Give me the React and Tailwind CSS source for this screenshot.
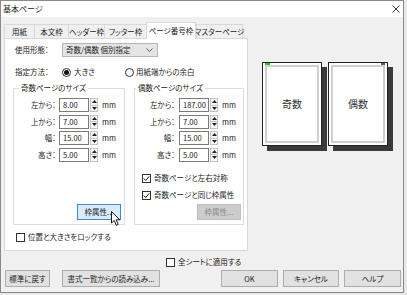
import React from "react";

function Spin() {
  return (
    <div className="ml-[1px] w-[8px] h-[14px] flex flex-col border border-[#c4c4c4] bg-[#f7f7f7]">
      <div className="flex-1 flex items-center justify-center">
        <svg width="5" height="3" viewBox="0 0 5 3"><path d="M0 3L2.5 0L5 3Z" fill="#222" /></svg>
      </div>
      <div className="h-px bg-[#c4c4c4]" />
      <div className="flex-1 flex items-center justify-center">
        <svg width="5" height="3" viewBox="0 0 5 3"><path d="M0 0L2.5 3L5 0Z" fill="#222" /></svg>
      </div>
    </div>
  );
}

function NumRow({ label, value, labelW }) {
  return (
    <div className="flex items-center h-[14px]">
      <div className={labelW + " text-right"}>{label}</div>
      <div className="w-[30px] h-[14px] border border-[#7a7a7a] bg-white flex items-center pl-[3px]">{value}</div>
      <Spin />
      <div className="ml-[4px]">mm</div>
    </div>
  );
}

function Check({ checked }) {
  return (
    <span className="w-[9px] h-[9px] border border-[#333] bg-white flex items-center justify-center shrink-0">
      {checked && (
        <svg width="7" height="7" viewBox="0 0 7 7">
          <path d="M0.8 3.6L2.7 5.5L6.3 1.3" stroke="#111" strokeWidth="1" fill="none" />
        </svg>
      )}
    </span>
  );
}

function Radio({ on }) {
  return (
    <span className="w-[9px] h-[9px] rounded-full border border-[#333] bg-white flex items-center justify-center shrink-0">
      {on && <span className="w-[5px] h-[5px] rounded-full bg-[#111]" />}
    </span>
  );
}

const tabs = [
  { t: "用紙", w: "w-[30px]" },
  { t: "本文枠", w: "w-[34px]" },
  { t: "ヘッダー枠", w: "w-[36px]" },
  { t: "フッター枠", w: "w-[42px]" },
  { t: "ページ番号枠", w: "w-[50px]", sel: true },
  { t: "マスターページ", w: "w-[47px]", last: true },
];

function Page({ label, mark }) {
  return (
    <div className="relative w-[60px] h-[84px] bg-white border border-[#222] shadow-[5px_5px_0_#3a3a3a] p-[2px]">
      {mark === "left" && <div className="absolute left-[2px] top-0 w-[5px] h-[2px] bg-[#22c322]" />}
      {mark === "right" && <div className="absolute right-[2px] top-0 w-[4px] h-[2px] bg-[#7a4a6a]" />}
      <div className="w-full h-full border-2 border-[#cfcfcf] flex items-center justify-center text-[10px] text-[#333]">{label}</div>
    </div>
  );
}

export default function App() {
  return (
    <div className="relative w-[407px] h-[295px] bg-[#e9e9e9] overflow-hidden font-['Noto_Sans_CJK_JP',sans-serif] [font-feature-settings:'palt'] text-[7.5px] leading-[12px] text-[#1a1a1a] whitespace-nowrap">
      <div className="w-[404px] h-[293px] bg-[#f0f0f0] border border-[#8a8a8a] flex flex-col">
        {/* title bar */}
        <div className="h-[16px] bg-white flex items-center justify-between pl-[2px] pr-[3px]">
          <span className="text-[8px]">基本ページ</span>
          <svg width="8" height="8" viewBox="0 0 8 8">
            <path d="M0.5 0.5L7.5 7.5M7.5 0.5L0.5 7.5" stroke="#222" strokeWidth="0.9" />
          </svg>
        </div>

        {/* main area */}
        <div className="flex pt-[5px] pl-[3px]">
          <div className="w-[244px] flex flex-col">
            <div className="flex items-end h-[16px]">
              {tabs.map((tb) =>
                tb.sel ? (
                  <div key={tb.t} className={tb.w + " h-[17px] -mb-px relative z-10 bg-white border border-b-0 border-[#d9d9d9] flex items-center justify-center"}>
                    {tb.t}
                  </div>
                ) : (
                  <div key={tb.t} className={tb.w + " h-[14px] border-t border-l border-[#d9d9d9] bg-[#f0f0f0] flex items-center justify-center " + (tb.last ? "border-r" : "")}>
                    {tb.t}
                  </div>
                )
              )}
            </div>

            <div className="w-[244px] h-[213px] bg-white border border-[#d9d9d9] flex flex-col">
              <div className="mt-[4px] ml-[10px] flex items-center h-[14px]">
                <div className="w-[47px]">使用形態：</div>
                <div className="w-[96px] h-[14px] bg-[#e5e5e5] border border-[#b5b5b5] flex items-center justify-between pl-[3px] pr-[4px]">
                  <span>奇数/偶数 個別指定</span>
                  <svg width="7" height="4" viewBox="0 0 7 4">
                    <path d="M0.5 0.5L3.5 3.5L6.5 0.5" stroke="#333" strokeWidth="0.8" fill="none" />
                  </svg>
                </div>
              </div>

              <div className="mt-[8px] ml-[10px] flex items-center h-[14px]">
                <div className="w-[47px]">指定方法：</div>
                <div className="w-[63px] flex items-center gap-[3px]">
                  <Radio on />
                  <span>大きさ</span>
                </div>
                <div className="flex items-center gap-[2px]">
                  <Radio />
                  <span>用紙端からの余白</span>
                </div>
              </div>

              <div className="mt-[3px] ml-[8px] flex gap-[9px]">
                <fieldset className="w-[112px] border border-[#dcdcdc]">
                  <legend className="ml-[5px] px-[2px] leading-[12px]">奇数ページのサイズ</legend>
                  <div className="h-[130px] flex flex-col pt-[4px] pb-[4px] pr-[3px]">
                    <div className="flex flex-col gap-[2.5px]">
                      <NumRow label="左から：" value="8.00" labelW="w-[42px] mr-[3px]" />
                      <NumRow label="上から：" value="7.00" labelW="w-[42px] mr-[3px]" />
                      <NumRow label="幅：" value="15.00" labelW="w-[42px] mr-[3px]" />
                      <NumRow label="高さ：" value="5.00" labelW="w-[42px] mr-[3px]" />
                    </div>
                    <div className="mt-auto self-end w-[44px] h-[16px] bg-[#d9eaf8] border border-[#3a8ad6] flex items-center justify-center">
                      枠属性...
                    </div>
                  </div>
                </fieldset>

                <fieldset className="w-[110px] border border-[#dcdcdc]">
                  <legend className="ml-[1px] px-[2px] leading-[12px]">偶数ページのサイズ</legend>
                  <div className="h-[130px] flex flex-col pt-[4px] pb-[4px] pr-[2px]">
                    <div className="flex flex-col gap-[2.5px]">
                      <NumRow label="左から：" value="187.00" labelW="w-[40px] mr-[4px]" />
                      <NumRow label="上から：" value="7.00" labelW="w-[40px] mr-[4px]" />
                      <NumRow label="幅：" value="15.00" labelW="w-[40px] mr-[4px]" />
                      <NumRow label="高さ：" value="5.00" labelW="w-[40px] mr-[4px]" />
                    </div>
                    <div className="mt-[10.5px] ml-[7px] h-[12px] flex items-center gap-[3px]">
                      <Check checked />
                      <span>奇数ページと左右対称</span>
                    </div>
                    <div className="mt-[5px] ml-[7px] h-[12px] flex items-center gap-[3px]">
                      <Check checked />
                      <span>奇数ページと同じ枠属性</span>
                    </div>
                    <div className="mt-auto self-end w-[44px] h-[16px] bg-[#cccccc] border border-[#bfbfbf] text-[#8a8a8a] flex items-center justify-center">
                      枠属性...
                    </div>
                  </div>
                </fieldset>
              </div>

              <div className="mt-[6px] ml-[11px] h-[12px] flex items-center gap-[3px]">
                <Check />
                <span>位置と大きさをロックする</span>
              </div>
            </div>
          </div>

          <div className="ml-[14px] pt-[40px] flex gap-[6px] items-start">
            <Page label="奇数" mark="left" />
            <Page label="偶数" mark="right" />
          </div>
        </div>

        <div className="mt-[5px] pl-[165px] h-[12px] flex items-center gap-[3px]">
          <Check />
          <span>全シートに適用する</span>
        </div>

        <div className="mt-[2px] flex pl-[4px] pr-[2px] h-[17px]">
          <div className="w-[45px] h-[17px] bg-[#e1e1e1] border border-[#adadad] flex items-center justify-center">標準に戻す</div>
          <div className="ml-[12px] w-[98px] h-[17px] bg-[#e1e1e1] border border-[#adadad] flex items-center justify-center">書式一覧からの読み込み...</div>
          <div className="ml-auto w-[57px] h-[17px] bg-[#e1e1e1] border border-[#adadad] flex items-center justify-center">OK</div>
          <div className="ml-[5px] w-[56px] h-[17px] bg-[#e1e1e1] border border-[#adadad] flex items-center justify-center">キャンセル</div>
          <div className="ml-[5px] w-[57px] h-[17px] bg-[#e1e1e1] border border-[#adadad] flex items-center justify-center">ヘルプ</div>
        </div>
      </div>

      {/* mouse cursor overlay */}
      <svg className="absolute left-[111px] top-[211px]" width="10" height="16" viewBox="0 0 10 16">
        <path d="M0.5 0.5L0.5 12L3.2 9.5L5.3 14.3L7.2 13.5L5.2 8.8L8.8 8.8Z" fill="#fff" stroke="#000" strokeWidth="0.9" strokeLinejoin="round" />
      </svg>
    </div>
  );
}
